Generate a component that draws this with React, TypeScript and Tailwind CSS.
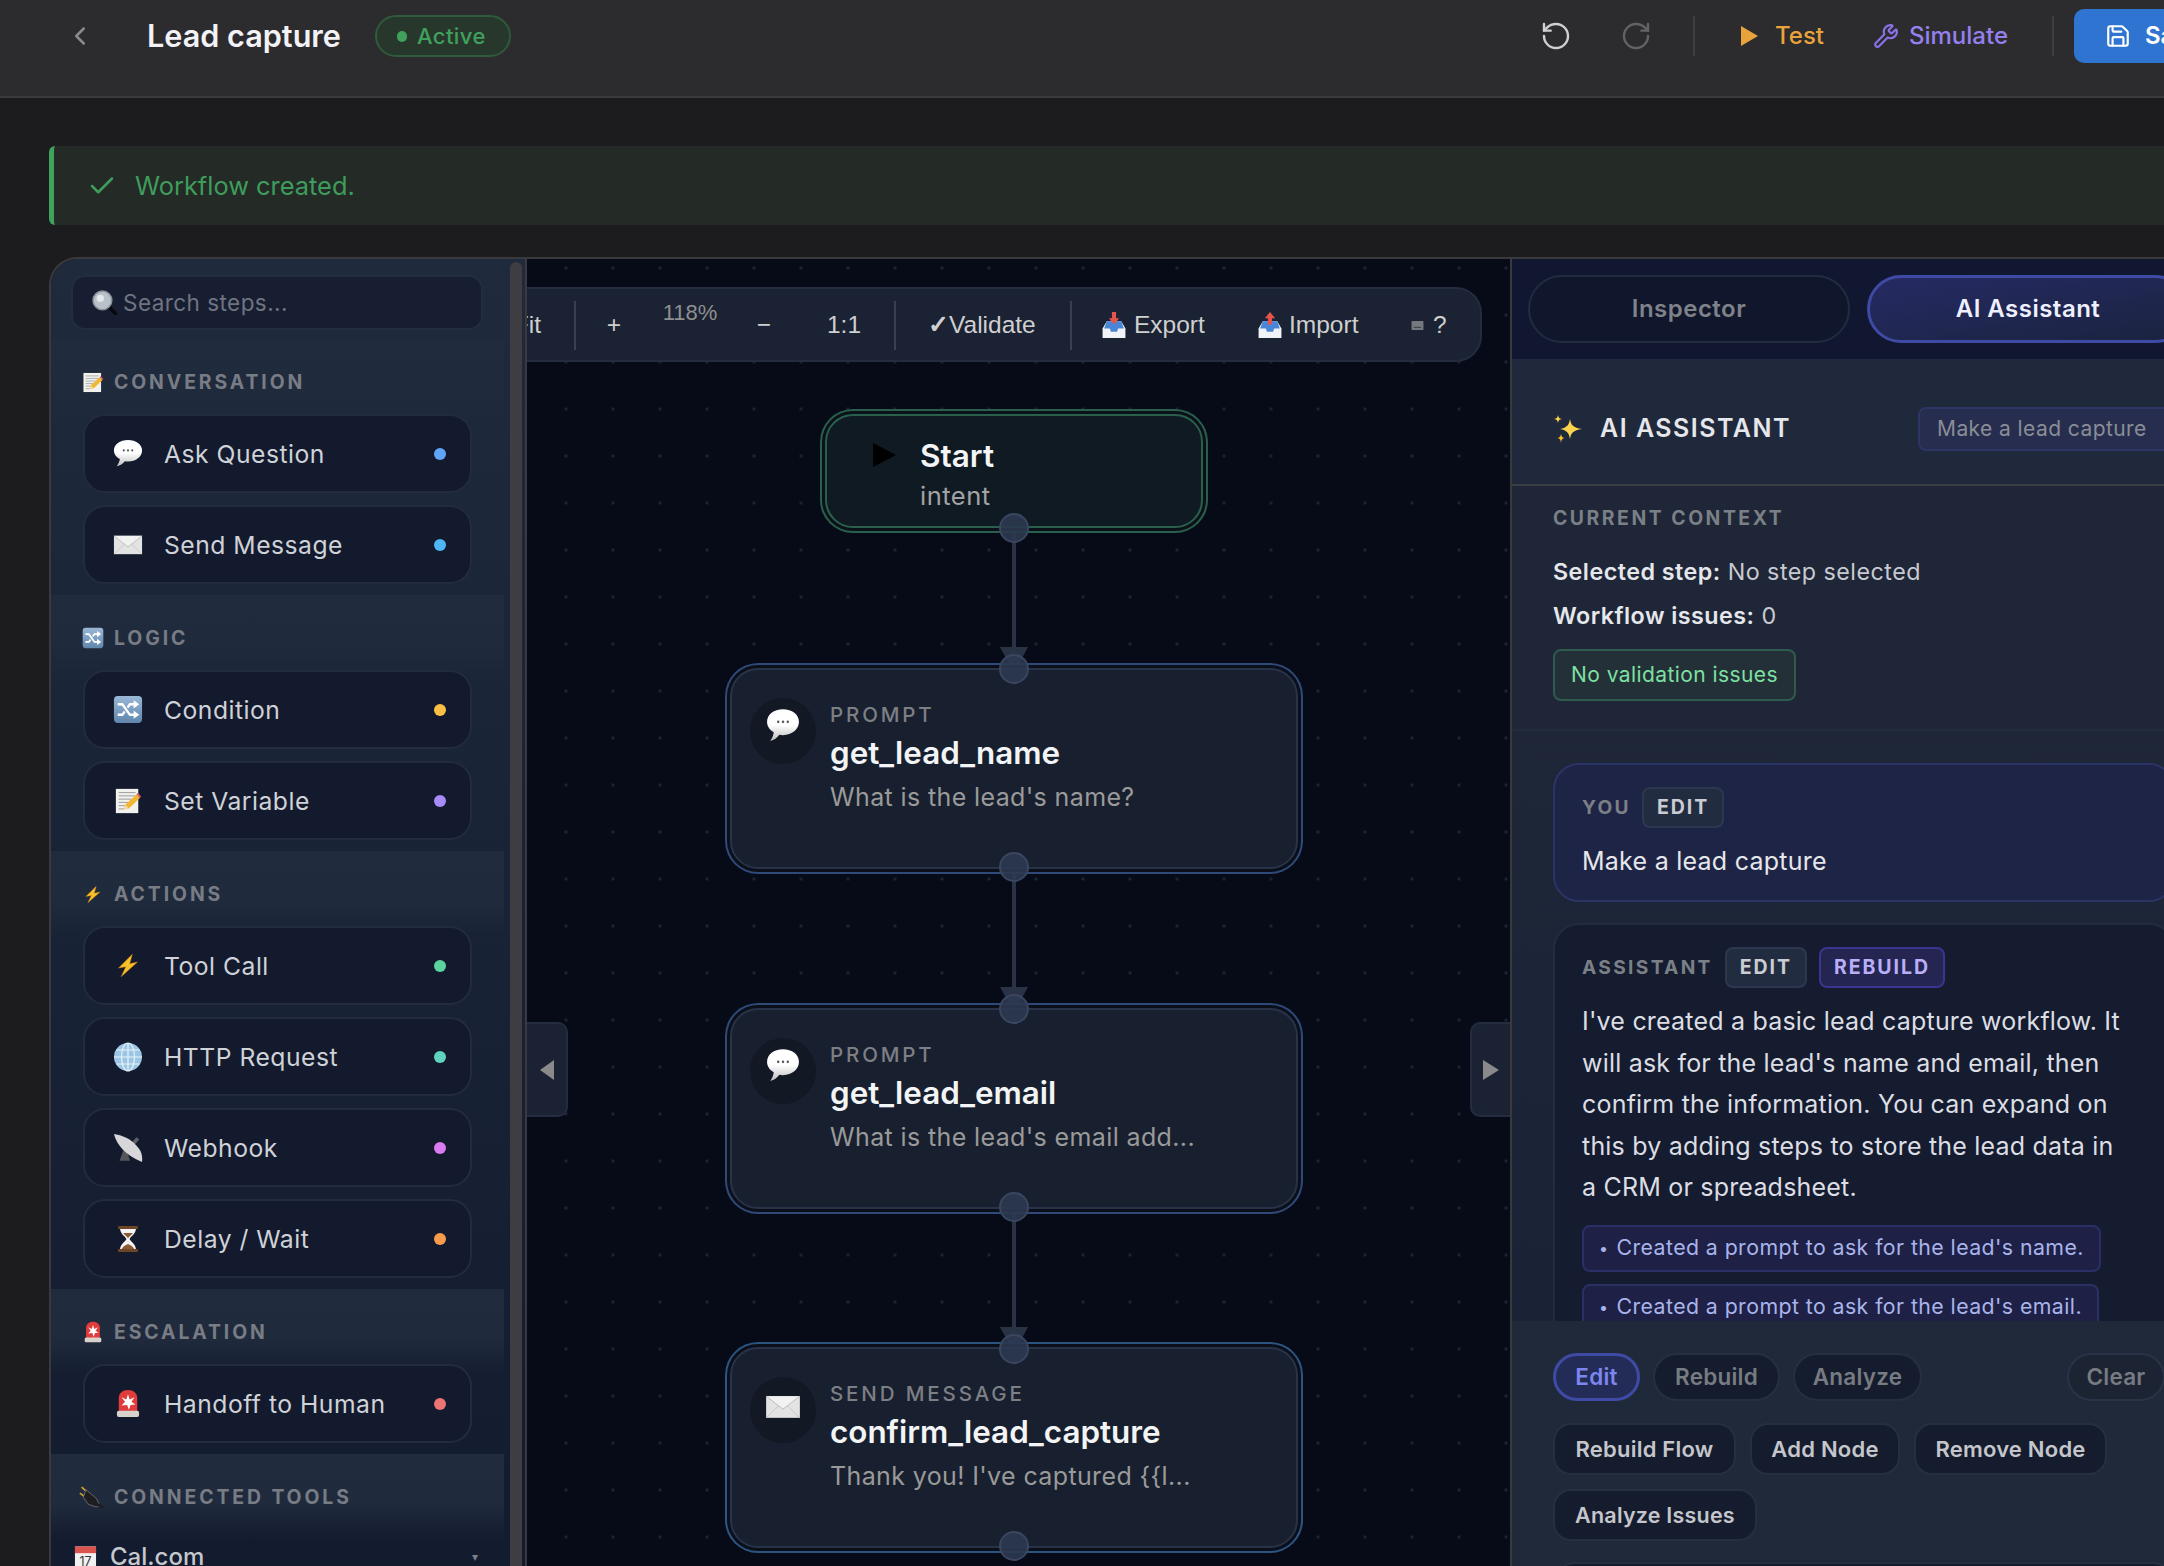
import { Check, ChevronLeft, RotateCcw, RotateCw, Save, Wrench } from "lucide-react";

type IconProps = { className?: string };

function Bubble({ className }: IconProps) {
  return (
    <svg viewBox="0 0 32 28" preserveAspectRatio="none" className={className}>
      <defs>
        <linearGradient id="bubble" x1="0" y1="0" x2="0" y2="1">
          <stop offset="0.5" stopColor="#ffffff" />
          <stop offset="1" stopColor="#bdbdbd" />
        </linearGradient>
      </defs>
      <path d="M16 1C7.5 1 1 5.2 1 11c0 3.6 2.5 6.6 6.3 8.4-.4 2.6-1.6 5-3.3 7 3.6-.8 6.6-2.6 8.6-5 1.1.2 2.2.3 3.4.3 8.5 0 15-4.8 15-10.7S24.5 1 16 1z" fill="url(#bubble)" />
      <circle cx="11.5" cy="11" r="1.1" fill="#555" />
      <circle cx="16" cy="11" r="1.1" fill="#555" />
      <circle cx="20.5" cy="11" r="1.1" fill="#555" />
    </svg>
  );
}

function Envelope({ className }: IconProps) {
  return (
    <svg viewBox="0 0 32 24" preserveAspectRatio="none" className={className}>
      <rect x="1" y="2" width="30" height="20" fill="#e3e3e3" />
      <path d="M1 2l15 12L31 2" fill="#f2f2f2" stroke="#b5b5b5" strokeWidth="0.8" />
      <path d="M1 22l11-11M31 22L20 11" stroke="#c4c4c4" strokeWidth="0.8" fill="none" />
    </svg>
  );
}

function Shuffle({ className }: IconProps) {
  return (
    <svg viewBox="0 0 32 28" preserveAspectRatio="none" className={className}>
      <defs>
        <linearGradient id="shuf" x1="0" y1="0" x2="0" y2="1">
          <stop offset="0" stopColor="#9ab8d6" />
          <stop offset="1" stopColor="#5f86ad" />
        </linearGradient>
      </defs>
      <rect x="1" y="1" width="30" height="26" rx="4" fill="url(#shuf)" />
      <path d="M5 9h5l8 10h5M5 19h5l2.5-3M15.5 12L18 9h5" stroke="#fff" strokeWidth="2.4" fill="none" />
      <path d="M22 5l6 4-6 4zM22 15l6 4-6 4z" fill="#fff" />
    </svg>
  );
}

function Memo({ className }: IconProps) {
  return (
    <svg viewBox="0 0 30 28" className={className}>
      <rect x="2" y="1" width="24" height="26" fill="#f1f1ee" />
      <path d="M5 5h18M5 8.5h18M5 12h14M5 15.5h10M5 19h8M5 22.5h6" stroke="#8c8c8c" strokeWidth="0.9" />
      <path d="M10 23l2-5L24 7l4 3.5L16 22z" fill="#f2b632" />
      <path d="M10 23l2-5 4 4z" fill="#f3d7ad" />
      <path d="M24 7l4 3.5 1-1.5-3.5-3.5z" fill="#e0586a" />
    </svg>
  );
}

function Bolt({ className }: IconProps) {
  return (
    <svg viewBox="0 0 28 28" className={className}>
      <path d="M19 1L3 17l8.5-1.5L6 27l19-17-9 2z" fill="#f6c026" stroke="#e08a12" strokeWidth="0.5" />
    </svg>
  );
}

function Globe({ className }: IconProps) {
  return (
    <svg viewBox="0 0 30 30" className={className}>
      <circle cx="15" cy="15" r="14" fill="#9cc6e4" />
      <g stroke="#e6f2fa" strokeWidth="1.2" fill="none">
        <ellipse cx="15" cy="15" rx="6.5" ry="14" />
        <path d="M15 1v28M1 15h28M3.5 8h23M3.5 22h23" />
      </g>
    </svg>
  );
}

function Dish({ className }: IconProps) {
  return (
    <svg viewBox="0 0 32 28" preserveAspectRatio="none" className={className}>
      <path d="M11 16l-4 10h11l-3-10z" fill="#55565a" />
      <path d="M17 12l8-8 3 2-8 8z" fill="#606165" />
      <path d="M1 1c3 10 12 20 30 26 1-9-3-13-9-18C15 4 8 2 1 1z" fill="#d7d7d9" />
    </svg>
  );
}

function Hourglass({ className }: IconProps) {
  return (
    <svg viewBox="0 0 24 28" className={className}>
      <path d="M4 3h16c0 6-5 8-6.5 11 1.5 3 6.5 5 6.5 11H4c0-6 5-8 6.5-11C9 11 4 9 4 3z" fill="#f4f4f4" />
      <path d="M7 8h10l-5 5zM5.5 25c.5-3 4-5 6.5-6 2.5 1 6 3 6.5 6z" fill="#8c5a34" />
      <rect x="2" y="1" width="20" height="3" rx="1" fill="#6d4527" />
      <rect x="2" y="24" width="20" height="3" rx="1" fill="#6d4527" />
    </svg>
  );
}

function Siren({ className }: IconProps) {
  return (
    <svg viewBox="0 0 26 28" preserveAspectRatio="none" className={className}>
      <path d="M3 22V9c0-5 4-8 10-8s10 3 10 8v13z" fill="#e23b3b" />
      <rect x="1" y="21" width="24" height="6" rx="2" fill="#d8d2cc" />
      <path d="M13 5l1.8 5.2L20 8l-3.2 4.4L21 15l-5.2.4L14 20l-2-4.6L6 16l3.8-3.6L6 8l5.2 2.2z" fill="#fff" />
    </svg>
  );
}

function Plug({ className }: IconProps) {
  return (
    <svg viewBox="0 0 30 26" className={className}>
      <path d="M3 1l8 7M1 8l7 5" stroke="#c9a227" strokeWidth="2" />
      <path d="M8 4l12 10 4 8-4 2-9-3-6-8z" fill="#1e1e22" stroke="#6e7076" strokeWidth="1" />
      <path d="M22 21l6 4" stroke="#1e1e22" strokeWidth="3" />
    </svg>
  );
}

function Calendar({ className }: IconProps) {
  return (
    <svg viewBox="0 0 24 24" className={className}>
      <rect x="1" y="1" width="22" height="22" fill="#f1f1f1" />
      <rect x="1" y="1" width="22" height="7" fill="#d9534f" />
      <text x="12" y="21" fontSize="13" fontFamily="Inter, sans-serif" fill="#333" textAnchor="middle">17</text>
    </svg>
  );
}

function Magnifier({ className }: IconProps) {
  return (
    <svg viewBox="0 0 24 24" className={className}>
      <path d="M14 14l9 9" stroke="#07090f" strokeWidth="3.5" strokeLinecap="round" />
      <circle cx="10" cy="10" r="9" fill="#b9c2c9" stroke="#8a9298" strokeWidth="1.5" />
      <circle cx="8" cy="8" r="3.5" fill="#e4e8eb" />
    </svg>
  );
}

function Sparkles({ className }: IconProps) {
  return (
    <svg viewBox="0 0 30 28" className={className}>
      <path d="M17 4c1 6 3 8.5 12 10-9 1.5-11 4-12 10-1-6-3-8.5-10-10 7-1.5 9-4 10-10z" fill="#fcd34d" />
      <path d="M5 0c.5 2.5 1 3.5 4 4-3 .5-3.5 1.5-4 4-.5-2.5-1-3.5-4-4 3-.5 3.5-1.5 4-4z" fill="#fcd34d" />
      <path d="M8 19c.5 2.5 1 3.5 3.5 4-2.5.5-3 1.5-3.5 5-.5-3.5-1-4.5-3.5-5 2.5-.5 3-1.5 3.500-4z" fill="#fbbf24" />
    </svg>
  );
}

function Tray({ className, up }: IconProps & { up?: boolean }) {
  return (
    <svg viewBox="0 0 24 26" className={className}>
      <path d="M1 16l4-7h14l4 7v9H1z" fill="#f1f3f6" />
      <path d="M5 9h14l2.5 7H16l-1 3H9l-1-3H2.5z" fill="#4a86d8" />
      {up ? <path d="M12 0l5 6h-3v6h-4V6H7z" fill="#e5534b" /> : <path d="M12 12l5-6h-3V0h-4v6H7z" fill="#e5534b" />}
    </svg>
  );
}

function Keyboard({ className }: IconProps) {
  return (
    <svg viewBox="0 0 14 12" className={className}>
      <rect x="0.5" y="1" width="13" height="10" rx="1" fill="#74787f" />
      <path d="M3 8h8" stroke="#30343b" strokeWidth="1" />
    </svg>
  );
}

const sections = [
  {
    title: "CONVERSATION",
    icon: <Memo className="w-[22px] h-[21px]" />,
    items: [
      { label: "Ask Question", icon: <Bubble className="w-[30px] h-[29px]" />, dot: "bg-[#60a5fa]" },
      { label: "Send Message", icon: <Envelope className="w-[30px] h-[22px]" />, dot: "bg-[#4fb6f6]" },
    ],
  },
  {
    title: "LOGIC",
    icon: <Shuffle className="w-[22px] h-[22px]" />,
    items: [
      { label: "Condition", icon: <Shuffle className="w-[30px] h-[29px]" />, dot: "bg-[#fbbf44]" },
      { label: "Set Variable", icon: <Memo className="w-[28px] h-[30px]" />, dot: "bg-[#a78bfa]" },
    ],
  },
  {
    title: "ACTIONS",
    icon: <Bolt className="w-[18px] h-[21px]" />,
    items: [
      { label: "Tool Call", icon: <Bolt className="w-[24px] h-[29px]" />, dot: "bg-[#5dd39e]" },
      { label: "HTTP Request", icon: <Globe className="w-[30px] h-[30px]" />, dot: "bg-[#5fd3c0]" },
      { label: "Webhook", icon: <Dish className="w-[30px] h-[30px]" />, dot: "bg-[#d97af0]" },
      { label: "Delay / Wait", icon: <Hourglass className="w-[24px] h-[30px]" />, dot: "bg-[#f59b4a]" },
    ],
  },
  {
    title: "ESCALATION",
    icon: <Siren className="w-[18px] h-[22px]" />,
    items: [{ label: "Handoff to Human", icon: <Siren className="w-[24px] h-[29px]" />, dot: "bg-[#ec7474]" }],
  },
];

function Section({ title, icon, items }: (typeof sections)[number]) {
  return (
    <div className="px-[32px] pb-[11px] bg-[linear-gradient(to_bottom,#212b3e_0px,#202a3d_50px,transparent_85px)]">
      <div className="h-[75px] pt-[27px] flex items-start">
        <div className="w-[24px] h-[32px] flex items-center justify-center -ml-[2px]">{icon}</div>
        <span className="ml-[9px] text-[19.4px] leading-[32px] font-bold tracking-[0.15em] text-[#787c84]">{title}</span>
      </div>
      <div className="flex flex-col gap-[12px]">
        {items.map((item) => (
          <div key={item.label} className="h-[79px] rounded-[22px] border-2 border-[#222b40] bg-[#141a2e] flex items-center pl-[27px] pr-[24px]">
            <div className="w-[32px] flex items-center justify-center">{item.icon}</div>
            <span className="ml-[20px] pt-[2px] text-[24.7px] tracking-[0.02em] text-[#cfd2d7]">{item.label}</span>
            <span className={`ml-auto w-[12px] h-[12px] rounded-full ${item.dot}`} />
          </div>
        ))}
      </div>
    </div>
  );
}

function Sidebar() {
  return (
    <aside className="w-[476px] shrink-0 flex border-r-2 border-[#3a3a3e] bg-gradient-to-b from-[#1f2a3d] to-[#121a2e] rounded-tl-[26px] overflow-hidden">
      <div className="w-[453px] shrink-0">
        <div className="ml-[20px] mt-[16px] mb-[9px] w-[412px] h-[55px] rounded-[14px] border-2 border-[#232d42] bg-[#171e31] flex items-center pl-[19px]">
          <Magnifier className="w-[25px] h-[25px] shrink-0" />
          <span className="ml-[6px] text-[22.5px] tracking-[0.02em] text-[#6f7580]">Search steps...</span>
        </div>
        {sections.map((s) => (
          <Section key={s.title} {...s} />
        ))}
        <div className="px-[32px] bg-[linear-gradient(to_bottom,#212b3e_0px,#202a3d_50px,transparent_85px)]">
          <div className="h-[75px] pt-[27px] flex items-start">
            <div className="w-[26px] h-[32px] flex items-center justify-center -ml-[4px]">
              <Plug className="w-[26px] h-[23px]" />
            </div>
            <span className="ml-[9px] text-[19.4px] leading-[32px] font-bold tracking-[0.15em] text-[#787c84]">CONNECTED TOOLS</span>
          </div>
          <div className="-ml-[9px] flex items-center mt-[10px]">
            <Calendar className="w-[23px] h-[24px]" />
            <span className="ml-[13px] text-[24px] font-medium text-[#c5c8cd]">Cal.com</span>
            <span className="ml-auto mr-[-6px] text-[12px] text-[#7a7e86]">▾</span>
          </div>
        </div>
      </div>
      <div className="ml-[6px] mt-[3px] w-[12px] rounded-full bg-[#3e3e42]" />
    </aside>
  );
}

function Sep() {
  return <span className="w-[2px] h-[49px] shrink-0 bg-[#3a404f]" />;
}

function Toolbar() {
  return (
    <div className="absolute left-0 top-[28px] w-[955px] h-[75px] overflow-hidden flex items-center pt-[2px] bg-[#1a2233] border-y-2 border-r-2 border-[#232d3f] rounded-r-[26px] font-['Liberation_Sans',sans-serif] text-[24.5px] text-[#cfcfcf] whitespace-nowrap">
      <span className="w-[47px] flex justify-end pr-[33px] shrink-0">Fit</span>
      <Sep />
      <span className="w-[76px] text-center shrink-0">+</span>
      <span className="w-[76px] text-center shrink-0 text-[22px] text-[#8f8f8f] mb-[26px]">118%</span>
      <span className="w-[72px] text-center shrink-0">−</span>
      <span className="w-[88px] text-center shrink-0">1:1</span>
      <span className="w-[6px] shrink-0" />
      <Sep />
      <span className="ml-[32px] w-[110px] shrink-0"><b className="font-bold">✓</b>Validate</span>
      <span className="w-[32px] shrink-0" />
      <Sep />
      <Tray className="ml-[29px] w-[26px] h-[27px] shrink-0" />
      <span className="ml-[7px] w-[70px] shrink-0">Export</span>
      <Tray up className="ml-[53px] w-[26px] h-[27px] shrink-0" />
      <span className="ml-[6px] w-[70px] shrink-0">Import</span>
      <Keyboard className="ml-[52px] w-[13px] h-[11px] shrink-0" />
      <span className="ml-[9px]">?</span>
    </div>
  );
}

function Handle({ top }: { top: number }) {
  return (
    <div
      className="absolute left-[472px] w-[30px] h-[30px] rounded-full border-2 border-[#3a4660] bg-[#2c3850]/90"
      style={{ top: top - 15 }}
    />
  );
}

const edges = [
  [269, 410],
  [608, 750],
  [948, 1090],
];

const flowNodes = [
  { top: 409, type: "PROMPT", name: "get_lead_name", desc: "What is the lead's name?", icon: <Bubble className="w-[34px] h-[35px] mb-[12px]" />, ring: "shadow-[0_0_0_3px_#0b0f1a,0_0_0_5px_#2f4a78]" },
  { top: 749, type: "PROMPT", name: "get_lead_email", desc: "What is the lead's email add...", icon: <Bubble className="w-[34px] h-[35px] mb-[12px]" />, ring: "shadow-[0_0_0_3px_#0b0f1a,0_0_0_5px_#2f4a78]" },
  { top: 1088, type: "SEND MESSAGE", name: "confirm_lead_capture", desc: "Thank you! I've captured {{l...", icon: <Envelope className="w-[36px] h-[26px] mb-[6px]" />, ring: "shadow-[0_0_0_3px_#0b0f1a,0_0_0_5px_#2b5580]" },
];

function Canvas() {
  return (
    <div className="relative w-[983px] shrink-0 overflow-hidden bg-[#060b17] bg-[radial-gradient(circle,#1c2434_1.3px,transparent_1.8px)] bg-[size:47px_47px] bg-[position:15.5px_-14.5px]">
      <Toolbar />

      <svg className="absolute inset-0 w-full h-full">
        {edges.map(([a, b]) => (
          <g key={a}>
            <line x1="487" y1={a} x2="487" y2={b} stroke="#2a3346" strokeWidth="4" />
            <polygon points={`473,${b - 22} 501,${b - 22} 487,${b + 4}`} fill="#2a3346" />
          </g>
        ))}
      </svg>

      <div className="absolute left-[298px] top-[155px] w-[378px] h-[114px] rounded-[28px] border-2 border-[#2b5f4d] bg-[#0f1a22] shadow-[0_0_0_3px_#0a1119,0_0_0_5px_#2b5f4d]">
        <svg viewBox="0 0 22 22" className="absolute left-[45px] top-[27px] w-[24px] h-[24px]">
          <path d="M1 0l21 11L1 22z" fill="#000" />
        </svg>
        <div className="absolute left-[93px] top-[20px] text-[31.5px] leading-[40px] font-semibold text-[#f3f4f6]">Start</div>
        <div className="absolute left-[93px] top-[62px] text-[25.5px] leading-[36px] tracking-[0.02em] text-[#a3a3a3]">intent</div>
      </div>

      {flowNodes.map((n) => (
        <div
          key={n.name}
          className={`absolute left-[203px] w-[568px] h-[201px] rounded-[28px] border-2 border-[#28334a] bg-[#18202f] flex pl-[18px] pt-[28px] ${n.ring}`}
          style={{ top: n.top }}
        >
          <div className="w-[66px] h-[66px] rounded-full bg-[#121824] flex items-center justify-center">{n.icon}</div>
          <div className="ml-[14px]">
            <div className="text-[20.5px] leading-[34px] font-medium tracking-[0.14em] text-[#7d7f85]">{n.type}</div>
            <div className="mt-[3px] text-[31.4px] leading-[36px] font-semibold text-[#f3f4f6]">{n.name}</div>
            <div className="mt-[9px] text-[25px] leading-[34px] tracking-[0.015em] text-[#9a9a9a]">{n.desc}</div>
          </div>
        </div>
      ))}

      {[269, 410, 608, 750, 948, 1090, 1287].map((t) => (
        <Handle key={t} top={t} />
      ))}

      <div className="absolute left-0 top-[763px] w-[41px] h-[95px] bg-[#1a2233] border-y-2 border-r-2 border-[#232d3f] rounded-r-[10px] flex items-center justify-center">
        <svg viewBox="0 0 14 20" className="w-[14px] h-[20px]">
          <path d="M14 0v20L0 10z" fill="#8a8a8a" />
        </svg>
      </div>
      <div className="absolute right-0 top-[763px] w-[40px] h-[95px] bg-[#1a2233] border-y-2 border-l-2 border-[#232d3f] rounded-l-[10px] flex items-center justify-center">
        <svg viewBox="0 0 16 20" className="w-[16px] h-[20px]">
          <path d="M0 0v20l16-10z" fill="#8a8a8a" />
        </svg>
      </div>
    </div>
  );
}

function Badge({ children, purple }: { children: string; purple?: boolean }) {
  return (
    <span
      className={`h-[41px] px-[13px] rounded-[8px] border-2 flex items-center text-[19.5px] font-bold tracking-[0.1em] ${
        purple ? "bg-[#242550] border-[#3b3490] text-[#b9aef8]" : "bg-[#222c40] border-[#2d3850] text-[#c9ccd2]"
      }`}
    >
      {children}
    </span>
  );
}

function RightPanel() {
  return (
    <aside className="w-[680px] shrink-0 border-l-2 border-[#3a3a3e] flex flex-col">
      <div className="h-[100px] shrink-0 bg-[#111730] pl-[16px] pt-[16px] flex gap-[17px]">
        <div className="w-[322px] h-[68px] rounded-full border-2 border-[#232b40] bg-[#10162b] flex items-center justify-center text-[24px] font-semibold tracking-[0.02em] text-[#7f8289]">
          Inspector
        </div>
        <div className="w-[322px] h-[68px] rounded-full border-[3px] border-[#3f4aa5] bg-gradient-to-br from-[#252a63] to-[#1b2340] flex items-center justify-center text-[24px] font-semibold tracking-[0.02em] text-[#eef0ff]">
          AI Assistant
        </div>
      </div>

      <div className="h-[127px] shrink-0 border-b-2 border-[#3a3d42] bg-[#20293c] pl-[41px] pt-[14px] flex items-center whitespace-nowrap">
        <Sparkles className="w-[30px] h-[30px] shrink-0" />
        <span className="ml-[17px] w-[190px] shrink-0 text-[25px] font-semibold tracking-[0.06em] text-[#e5e7eb]">AI ASSISTANT</span>
        <span className="ml-[128px] h-[44px] w-[300px] shrink-0 rounded-[8px] border-2 border-[#2d3566] bg-[#262d4e] pl-[17px] flex items-center text-[21px] tracking-[0.02em] text-[#8a8d96]">
          Make a lead capture
        </span>
      </div>

      <div className="h-[245px] shrink-0 border-b-2 border-[#232c3e] bg-[#1e2638] pl-[41px] pt-[22px]">
        <div className="text-[19.4px] leading-[20px] font-bold tracking-[0.13em] text-[#7b7f86]">CURRENT CONTEXT</div>
        <div className="mt-[24px] text-[23.3px] leading-[40px] tracking-[0.02em] text-[#c8cad0]">
          <span className="font-semibold text-[#e5e7eb]">Selected step:</span> No step selected
        </div>
        <div className="mt-[4px] text-[23.3px] leading-[40px] tracking-[0.02em] text-[#c8cad0]">
          <span className="font-semibold text-[#e5e7eb]">Workflow issues:</span> 0
        </div>
        <div className="mt-[13px] w-[243px] h-[52px] rounded-[8px] border-2 border-[#2f5a4e] bg-[#233038] flex items-center justify-center text-[21px] tracking-[0.02em] text-[#7ee0a0]">
          No validation issues
        </div>
      </div>

      <div className="h-[590px] shrink-0 overflow-hidden bg-gradient-to-b from-[#1e2638] to-[#1a2236] pl-[41px] pt-[32px]">
        <div className="w-[622px] h-[139px] rounded-[26px] border-2 border-[#2c3365] bg-[#1e2445] pl-[27px] pt-[22px]">
          <div className="flex items-center gap-[11px]">
            <span className="text-[19.2px] font-bold tracking-[0.12em] text-[#7b7f86]">YOU</span>
            <Badge>EDIT</Badge>
          </div>
          <div className="mt-[13px] text-[25px] leading-[41px] tracking-[0.01em] text-[#e5e7eb]">Make a lead capture</div>
        </div>
        <div className="mt-[21px] w-[622px] h-[500px] rounded-[26px] border-2 border-[#222b40] bg-[#151c30] pl-[27px] pt-[22px]">
          <div className="flex items-center gap-[12px]">
            <span className="text-[19.2px] font-bold tracking-[0.12em] text-[#7b7f86]">ASSISTANT</span>
            <Badge>EDIT</Badge>
            <Badge purple>REBUILD</Badge>
          </div>
          <p className="mt-[13px] w-[550px] text-[25px] leading-[41.5px] tracking-[0.008em] text-[#dcdee3]">
            I've created a basic lead capture workflow. It will ask for the lead's name and email, then confirm the information. You can expand on this by adding steps to store the lead data in a CRM or spreadsheet.
          </p>
          <div className="mt-[16px] flex flex-col items-start gap-[12px]">
            {["Created a prompt to ask for the lead's name.", "Created a prompt to ask for the lead's email."].map((t) => (
              <div key={t} className="h-[47px] rounded-[8px] border-2 border-[#2a2f66] bg-[#1e2145] pl-[15px] pr-[15px] flex items-center text-[21.3px] tracking-[0.02em] text-[#a9b4ec] whitespace-nowrap">
                <span className="mr-[8px] text-[16px]">•</span>
                {t}
              </div>
            ))}
          </div>
        </div>
      </div>

      <div className="flex-1 bg-[#20293a] pl-[41px] pt-[32px]">
        <div className="w-[612px] h-[48px] flex items-stretch gap-[13px] text-[22.5px] font-semibold tracking-[0.01em]">
          <span className="w-[87px] rounded-full border-[3px] border-[#3f4aa5] bg-[#232c57] text-[#7c86ee] flex items-center justify-center">Edit</span>
          <span className="w-[127px] rounded-full border-2 border-[#262f42] bg-[#151c2e] text-[#777b82] flex items-center justify-center">Rebuild</span>
          <span className="w-[129px] rounded-full border-2 border-[#262f42] bg-[#151c2e] text-[#777b82] flex items-center justify-center">Analyze</span>
          <span className="ml-auto w-[98px] rounded-full border-2 border-[#2a3346] bg-[#1c2434] text-[#777b82] flex items-center justify-center">Clear</span>
        </div>
        <div className="mt-[22px] flex gap-[14px] text-[22px] font-semibold tracking-[0.01em] text-[#c4c6cb]">
          <span className="w-[183px] h-[52px] rounded-[18px] border-2 border-[#262f42] bg-[#151c2e] flex items-center justify-center">Rebuild Flow</span>
          <span className="w-[150px] h-[52px] rounded-[18px] border-2 border-[#262f42] bg-[#151c2e] flex items-center justify-center">Add Node</span>
          <span className="w-[193px] h-[52px] rounded-[18px] border-2 border-[#262f42] bg-[#151c2e] flex items-center justify-center">Remove Node</span>
        </div>
        <div className="mt-[14px] w-[204px] h-[52px] rounded-[18px] border-2 border-[#262f42] bg-[#151c2e] flex items-center justify-center text-[21.5px] font-semibold tracking-[0.01em] text-[#c4c6cb]">
          Analyze Issues
        </div>
        <div className="mt-[21px] w-[622px] h-[40px] rounded-t-[22px] border-2 border-[#262f42] bg-[#151c2e]" />
      </div>
    </aside>
  );
}

export default function App() {
  return (
    <div className="w-[2164px] h-[1566px] overflow-hidden bg-[#1c1c1e] font-['Inter',sans-serif]">
      <header className="h-[98px] border-b-2 border-[#3a3a3c] bg-[#2c2c2e] overflow-hidden">
        <div className="h-[72px] flex items-center whitespace-nowrap">
          <ChevronLeft className="ml-[65px] w-[30px] h-[30px] shrink-0 text-[#8a8a8e]" strokeWidth={2} />
          <h1 className="ml-[52px] shrink-0 text-[30.6px] font-semibold text-[#f2f2f7]">Lead capture</h1>
          <div className="ml-[34px] h-[42px] w-[136px] shrink-0 rounded-full border-2 border-[#2f5a3c] bg-[#27372c] flex items-center pl-[20px]">
            <span className="w-[10px] h-[11px] rounded-full bg-[#41a05c]" />
            <span className="ml-[10px] text-[22px] font-medium tracking-[0.02em] text-[#41a05c]">Active</span>
          </div>
          <div className="ml-auto mr-[-50px] flex items-center shrink-0">
            <RotateCcw className="w-[32px] h-[32px] shrink-0 text-[#d0d0d2]" strokeWidth={1.8} />
            <RotateCw className="ml-[48px] w-[32px] h-[32px] shrink-0 text-[#636366]" strokeWidth={1.8} />
            <span className="ml-[41px] w-[2px] h-[40px] bg-[#3f3f42]" />
            <svg viewBox="0 0 17 20" className="ml-[46px] w-[17px] h-[20px] shrink-0">
              <path d="M0 0l17 10L0 20z" fill="#e8a33d" />
            </svg>
            <span className="ml-[17px] w-[48px] text-[24px] font-medium text-[#e8a33d]">Test</span>
            <Wrench className="ml-[50px] w-[26px] h-[26px] shrink-0 text-[#8b72e8]" strokeWidth={2} />
            <span className="ml-[10px] w-[100px] text-[24px] font-medium text-[#9580ee]">Simulate</span>
            <span className="ml-[43px] w-[2px] h-[40px] bg-[#3f3f42]" />
            <div className="ml-[20px] h-[54px] w-[140px] shrink-0 rounded-[10px] bg-[#2f74d0] flex items-center pl-[31px]">
              <Save className="w-[26px] h-[26px] shrink-0 text-white" strokeWidth={2} />
              <span className="ml-[14px] text-[24px] font-semibold text-white">Save</span>
            </div>
          </div>
        </div>
      </header>

      <div className="mt-[48px] ml-[49px] w-[2200px] h-[79px] rounded-l-[6px] border-l-[5px] border-[#3fa35b] bg-[#242a26] flex items-center pl-[33px]">
        <Check className="w-[30px] h-[30px] shrink-0 text-[#3e9d5c]" strokeWidth={2} />
        <span className="ml-[18px] pt-[2px] text-[25.4px] text-[#3e9d5c]">Workflow created.</span>
      </div>

      <div className="mt-[32px] ml-[49px] w-[2200px] h-[1400px] flex border-t-2 border-l-2 border-[#3a3a3e] rounded-tl-[28px] overflow-hidden">
        <Sidebar />
        <Canvas />
        <RightPanel />
      </div>
    </div>
  );
}
